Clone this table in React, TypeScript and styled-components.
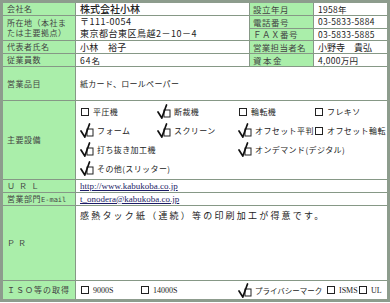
import styled, { createGlobalStyle } from "styled-components";

const GlobalStyle = createGlobalStyle`
  html, body {
    margin: 0;
    padding: 0;
    background: #ffffff;
  }
  body {
    font-family: "Noto Sans CJK JP", "Liberation Sans", sans-serif;
  }
`;

const Sheet = styled.table`
  width: 390px;
  border-collapse: collapse;
  border: 3px solid #8d9c8d;
  table-layout: fixed;
`;

const Row = styled.tr<{ $h: number }>`
  height: ${(p) => p.$h}px;
`;

const Label = styled.td<{ $wide?: boolean; $spread?: number }>`
  background: #aaeeaa;
  border: 1px solid #869886;
  padding: ${(p) => (p.$wide ? "0 0 0 3px" : "0 4px 0 4px")};
  font-size: ${(p) => (p.$wide ? 8.5 : 8)}px;
  letter-spacing: ${(p) => p.$spread ?? 0.5}px;
  line-height: 10px;
  color: #444444;
  vertical-align: middle;
  white-space: ${(p) => (p.$wide ? "nowrap" : "normal")};
`;

const Cell = styled.td<{ $top?: boolean; $size?: number; $spread?: number }>`
  background: #ffffff;
  border: 1px solid #869886;
  padding: ${(p) => (p.$top ? "4px 0 0 4px" : "0 0 0 4px")};
  font-size: ${(p) => p.$size ?? 8.5}px;
  letter-spacing: ${(p) => p.$spread ?? 0.3}px;
  line-height: 11px;
  color: #222222;
  vertical-align: ${(p) => (p.$top ? "top" : "middle")};
  white-space: nowrap;
  overflow: hidden;
`;

const Lines = styled.div`
  line-height: 12px;
`;

const Strong = styled.span`
  font-size: 10px;
  font-weight: 500;
  letter-spacing: 0;
`;

const Mail = styled.span`
  font-family: "DejaVu Sans Mono", monospace;
  font-size: 7px;
  letter-spacing: 0;
`;

const Link = styled.a`
  font-family: "Liberation Serif", serif;
  font-size: 9px;
  letter-spacing: 0;
  color: #1c1c66;
  text-decoration: underline;
`;

const Equipment = styled.div`
  display: grid;
  grid-template-columns: 77px 81px 76px 1fr;
  grid-auto-rows: 19px;
  align-items: center;
  font-size: 8px;
  letter-spacing: 0.4px;
`;

const Item = styled.div<{ $span?: number }>`
  display: flex;
  align-items: center;
  gap: 2px;
  white-space: nowrap;
  grid-column: span ${(p) => p.$span || 1};

  svg {
    flex-shrink: 0;
  }
`;

const IsoRow = styled.div`
  display: grid;
  grid-template-columns: 60px 98px 88px 32px 1fr;
  align-items: center;
  font-size: 7.5px;
  letter-spacing: 0;
`;

const Latin = styled.span`
  font-family: "Liberation Serif", serif;
  font-size: 8px;
  letter-spacing: 0;
`;

const Box = styled.span`
  display: inline-block;
  flex-shrink: 0;
  width: 6px;
  height: 6px;
  border: 1px solid #222222;
  margin: 0 2px 0 1px;
`;

const Checked = () => (
  <svg width="15" height="15" viewBox="0 0 15 15">
    <rect x="7" y="6" width="6" height="7" fill="none" stroke="#222" strokeWidth="1" />
    <path d="M1 8 L4.8 14 L9.5 1" fill="none" stroke="#111" strokeWidth="1.7" strokeLinecap="round" />
  </svg>
);

const Check = ({ on, children, span }: { on?: boolean; children: React.ReactNode; span?: number }) => (
  <Item $span={span}>
    {on ? <Checked /> : <Box />}
    <span>{children}</span>
  </Item>
);

export default function App() {
  return (
    <>
      <GlobalStyle />
      <Sheet>
        <colgroup>
          <col style={{ width: 74 }} />
          <col style={{ width: 174 }} />
          <col style={{ width: 64 }} />
          <col />
        </colgroup>
        <tbody>
          <Row $h={14}>
            <Label>会社名</Label>
            <Cell>
              <Strong>株式会社小林</Strong>
            </Cell>
            <Label $wide>設立年月</Label>
            <Cell>1958年</Cell>
          </Row>
          <Row $h={12}>
            <Label rowSpan={2}>所在地（本社または主要拠点）</Label>
            <Cell rowSpan={2} $size={9} $spread={0.5}>
              <Lines>〒111-0054</Lines>
              <Lines>東京都台東区鳥越2－10－4</Lines>
            </Cell>
            <Label $wide>電話番号</Label>
            <Cell>03-5833-5884</Cell>
          </Row>
          <Row $h={12}>
            <Label $wide>ＦＡＸ番号</Label>
            <Cell>03-5833-5885</Cell>
          </Row>
          <Row $h={13}>
            <Label>代表者氏名</Label>
            <Cell $size={9}>小林　裕子</Cell>
            <Label $wide $spread={0.3}>営業担当者名</Label>
            <Cell $size={9} $spread={0}>小野寺　貴弘</Cell>
          </Row>
          <Row $h={13}>
            <Label>従業員数</Label>
            <Cell $spread={1}>64名</Cell>
            <Label $wide $spread={1.5}>資本金</Label>
            <Cell>4,000万円</Cell>
          </Row>
          <Row $h={34}>
            <Label>営業品目</Label>
            <Cell colSpan={3} $size={8}>紙カード、ロールペーパー</Cell>
          </Row>
          <Row $h={79}>
            <Label>主要設備</Label>
            <Cell colSpan={3}>
              <Equipment>
                <Check>平圧機</Check>
                <Check on>断裁機</Check>
                <Check>輪転機</Check>
                <Check>フレキソ</Check>
                <Check on>フォーム</Check>
                <Check on>スクリーン</Check>
                <Check on>オフセット平判</Check>
                <Check>オフセット輪転</Check>
                <Check on span={2}>打ち抜き加工機</Check>
                <Check on span={2}>オンデマンド(デジタル)</Check>
                <Check on span={4}>その他(スリッター)</Check>
              </Equipment>
            </Cell>
          </Row>
          <Row $h={11}>
            <Label $spread={4}>ＵＲＬ</Label>
            <Cell colSpan={3}>
              <Link href="#">http://www.kabukoba.co.jp</Link>
            </Cell>
          </Row>
          <Row $h={12}>
            <Label>
              営業部門<Mail>E-mail</Mail>
            </Label>
            <Cell colSpan={3}>
              <Link href="#">t_onodera@kabukoba.co.jp</Link>
            </Cell>
          </Row>
          <Row $h={75}>
            <Label $spread={3}>ＰＲ</Label>
            <Cell colSpan={3} $top $size={9} $spread={2.2}>
              感熱タック紙（連続）等の印刷加工が得意です。
            </Cell>
          </Row>
          <Row $h={20}>
            <Label $spread={1}>ＩＳＯ等の取得</Label>
            <Cell colSpan={3}>
              <IsoRow>
                <Check>
                  <Latin>9000S</Latin>
                </Check>
                <Check>
                  <Latin>14000S</Latin>
                </Check>
                <Check on>プライバシーマーク</Check>
                <Check>
                  <Latin>ISMS</Latin>
                </Check>
                <Check>
                  <Latin>UL</Latin>
                </Check>
              </IsoRow>
            </Cell>
          </Row>
        </tbody>
      </Sheet>
    </>
  );
}
